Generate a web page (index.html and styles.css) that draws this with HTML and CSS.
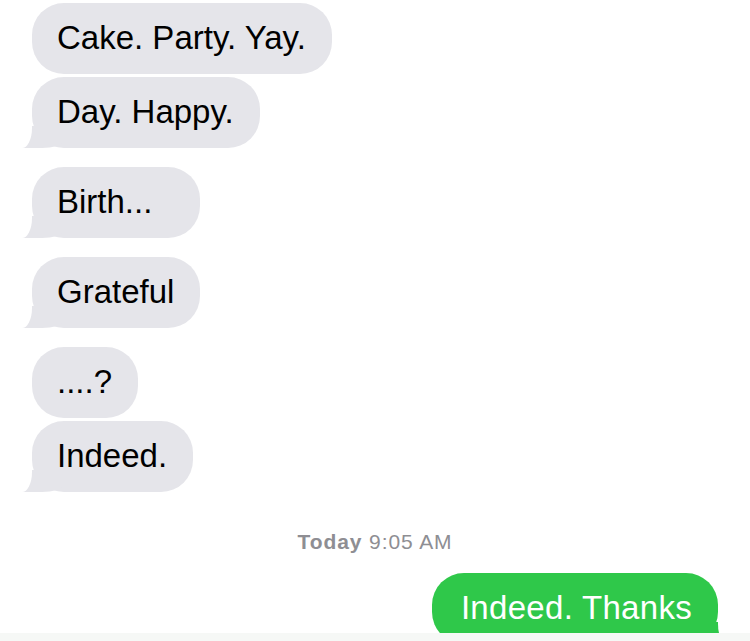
FILE: index.html
```html
<!DOCTYPE html>
<html lang="en">
<head>
<meta charset="utf-8">
<title>Messages</title>
<link rel="stylesheet" href="styles.css">
</head>
<body>
<main class="thread">
  <div class="group">
    <div class="bubble">Cake. Party. Yay.</div>
    <div class="bubble tail">Day. Happy.</div>
  </div>
  <div class="group">
    <div class="bubble tail roomy">Birth...</div>
  </div>
  <div class="group">
    <div class="bubble tail">Grateful</div>
  </div>
  <div class="group">
    <div class="bubble">....?</div>
    <div class="bubble tail">Indeed.</div>
  </div>
  <p class="stamp"><b>Today</b> 9:05 AM</p>
  <div class="group outgoing">
    <div class="bubble sent tail">Indeed. Thanks</div>
  </div>
</main>
<div class="composer"></div>
</body>
</html>
```
FILE: styles.css
```css
html, body {
  margin: 0;
  padding: 0;
  background: #ffffff;
}

body {
  width: 750px;
  height: 641px;
  overflow: hidden;
  font-family: "Liberation Sans", Arial, sans-serif;
}

.thread {
  height: 633px;
  overflow: hidden;
  box-sizing: border-box;
  padding: 3px 32px 0;
}

.group {
  display: flex;
  flex-direction: column;
  align-items: flex-start;
  gap: 3px;
  margin-bottom: 19px;
}

.group.outgoing {
  align-items: flex-end;
  margin-bottom: 0;
}

.bubble {
  position: relative;
  z-index: 0;
  box-sizing: border-box;
  height: 71px;
  padding: 16px 26px 17px 25px;
  font-size: 33px;
  line-height: 38px;
  color: #000000;
  background: #e5e5ea;
  border-radius: 32px;
  white-space: nowrap;
}

.bubble.roomy {
  padding-right: 48px;
}

/* incoming tail, bottom-left */
.bubble.tail::before,
.bubble.tail::after {
  content: "";
  position: absolute;
  bottom: 0;
}

.bubble.tail::before {
  left: -10px;
  width: 40px;
  height: 22px;
  background: #e5e5ea;
  border-bottom-right-radius: 20px 6px;
  z-index: -1;
}

.bubble.tail::after {
  left: -20px;
  width: 20px;
  height: 22px;
  background: #ffffff;
  border-bottom-right-radius: 10px 20px;
}

.bubble.sent {
  padding: 16px 26px 17px 29px;
  color: #ffffff;
  background: #2fc84a;
  letter-spacing: 0.3px;
}

/* outgoing tail, bottom-right */
.bubble.sent.tail::before {
  left: auto;
  right: -10px;
  background: #2fc84a;
  border-bottom-right-radius: 0;
  border-bottom-left-radius: 20px 6px;
}

.bubble.sent.tail::after {
  left: auto;
  right: -20px;
  border-bottom-right-radius: 0;
  border-bottom-left-radius: 10px 20px;
}

.stamp {
  margin: 38px 0 19px;
  text-align: center;
  font-size: 21px;
  line-height: 24px;
  letter-spacing: 0.9px;
  color: #8e8e93;
}

.stamp b {
  font-weight: 700;
}

.composer {
  height: 8px;
  background: #f6f8f6;
}
```
